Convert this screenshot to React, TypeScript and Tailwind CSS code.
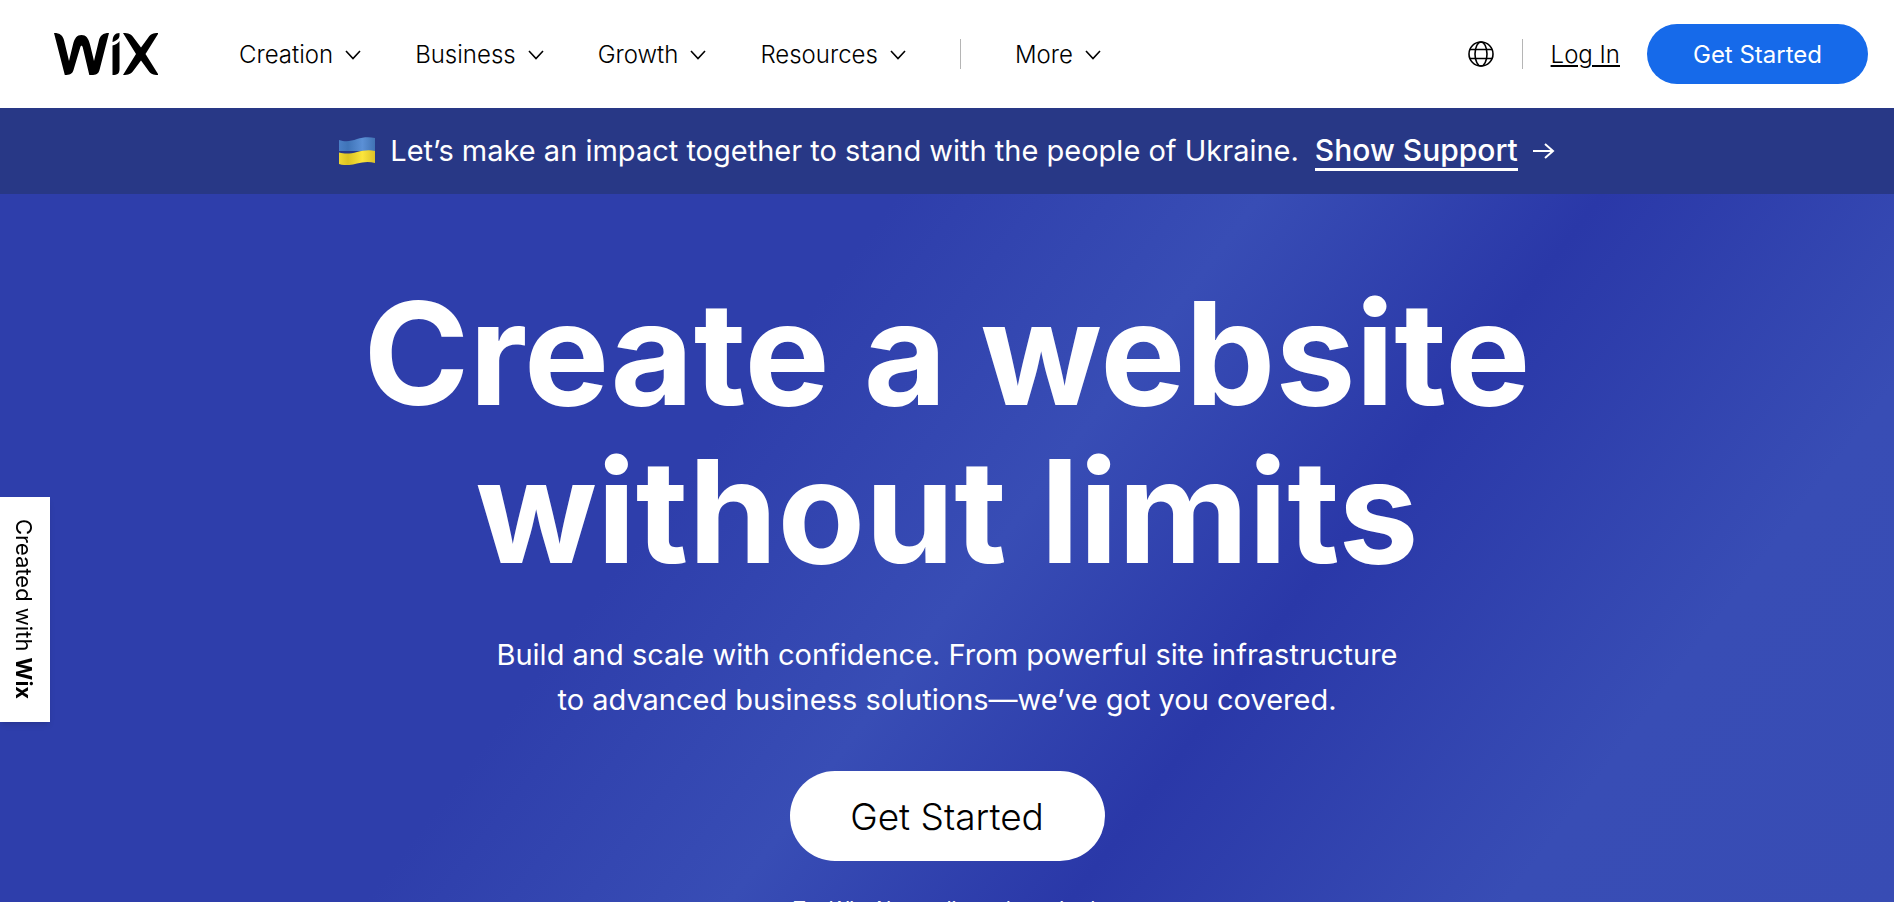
import { useId } from "react"

const navItems = ["Creation", "Business", "Growth", "Resources"]

function WixLogo() {
  return (
    <svg viewBox="0 0 104 42" className="h-[42px] w-[104px]" fill="currentColor" aria-hidden="true">
      <path d="M0 0c6 0 9 2.500 10.200 8l4.800 20 4-16.500C20.600 5 23 2 27.500 2s6.900 3 8.500 9.500L40 28l4.800-20C46 2.500 49 0 55 0l-9.500 37c-1 4-3.500 5-8 5h-2.200L28.800 14.500c-.5-2.300-2.100-2.300-2.600 0L19.500 37c-1 4-4 5-8.700 5z" />
      <path d="M58.500 9c0-6 2.500-9 7-9v2.500c0 3-2.500 5-7 6.500z" />
      <path d="M58.500 12.500c3.500-1 5.500-2.500 7-4.500v28c0 4.500-2 6-7 6z" />
      <path d="M69 0c5.500 0 8 1 10.500 4.500L87 14.500l7.300-10C96.800 1 99 0 104 0v1L91.500 21 104 41v1c-5 0-7.200-1-9.700-4.500L87 27.500l-7.500 10C77 41 74.500 42 69 42l13-21z" />
    </svg>
  )
}

function Chevron() {
  return (
    <svg viewBox="0 0 16 10" className="h-[10px] w-4" fill="none" stroke="currentColor" strokeWidth="1.600" aria-hidden="true">
      <path d="M1 1l7 7.500L15 1" />
    </svg>
  )
}

function NavButton({ label }: { label: string }) {
  return (
    <button type="button" className="flex items-center gap-3 pt-0.5">
      {label}
      <Chevron />
    </button>
  )
}

function Globe() {
  return (
    <svg viewBox="0 0 26 26" className="size-[26px]" fill="none" stroke="currentColor" strokeWidth="1.600" aria-hidden="true">
      <circle cx="13" cy="13" r="12" />
      <ellipse cx="13" cy="13" rx="6" ry="12" />
      <path d="M2 8.500h22M2 17.500h22" />
    </svg>
  )
}

function Flag() {
  const id = useId()
  return (
    <svg viewBox="0 0 36 28" className="h-7 w-9" aria-hidden="true">
      <defs>
        <linearGradient id={`${id}b`}>
          <stop offset="0" stopColor="#4a7fc6" />
          <stop offset=".25" stopColor="#3f74b8" />
          <stop offset=".65" stopColor="#5b90d6" />
          <stop offset="1" stopColor="#4173b4" />
        </linearGradient>
        <linearGradient id={`${id}y`}>
          <stop offset="0" stopColor="#f0d832" />
          <stop offset=".25" stopColor="#dcc322" />
          <stop offset=".65" stopColor="#fbe53c" />
          <stop offset="1" stopColor="#dcc228" />
        </linearGradient>
      </defs>
      <path d="M0 3c7 2.500 12 1 18-1s12-2.500 18-1v13H0z" fill={`url(#${id}b)`} />
      <path d="M0 15.500c7 2 12 1 18-.5s12-2.500 18-1V26c-6-1.500-12-1-18 .5S7 29 0 27z" fill={`url(#${id}y)`} />
    </svg>
  )
}

function Header() {
  return (
    <header className="flex h-[108px] shrink-0 items-center bg-white pr-[26px] pl-[54px] text-2xl font-light text-black">
      <a href="/" aria-label="Wix">
        <WixLogo />
      </a>
      <nav className="ml-[81px] flex items-center gap-[54px]">
        {navItems.map((item) => (
          <NavButton key={item} label={item} />
        ))}
        <span className="h-[30px] w-px bg-[#b5b5b5]" />
        <NavButton label="More" />
      </nav>
      <div className="ml-auto flex items-center">
        <button type="button" aria-label="Language">
          <Globe />
        </button>
        <span className="mx-7 h-[30px] w-px bg-[#b5b5b5]" />
        <a href="/login" className="pt-0.5 underline decoration-2 underline-offset-2">
          Log In
        </a>
        <button type="button" className="ml-[27px] h-[60px] w-[221px] rounded-full bg-[#166aea] pt-0.5 font-normal text-white">
          Get Started
        </button>
      </div>
    </header>
  )
}

function SupportBanner() {
  return (
    <div className="flex h-[86px] shrink-0 items-center justify-center bg-[#283886] text-[29px] text-white">
      <Flag />
      <p className="ml-[15px]">Let’s make an impact together to stand with the people of Ukraine.</p>
      <a href="/ukraine" className="ml-4 flex items-center gap-[15px] text-3xl font-medium">
        <span className="border-b-[3px] border-white">Show Support</span>
        <svg viewBox="0 0 22 16" className="h-4 w-[22px]" fill="none" stroke="currentColor" strokeWidth="2" aria-hidden="true">
          <path d="M0 8h20M12 1l8 7-8 7" />
        </svg>
      </a>
    </div>
  )
}

export default function App() {
  return (
    <div className="flex h-screen flex-col overflow-hidden font-[Inter,sans-serif]">
      <Header />
      <SupportBanner />
      <main className="flex min-h-0 flex-1 flex-col items-center bg-[linear-gradient(127deg,#2e3eab_0%,#2e3eab_37%,#384db5_52%,#2a38a8_66%,#384db5_84%,#384cb4_100%)] pt-20 text-center text-white">
        <h1 className="text-[143px] leading-[158px] font-bold">
          Create a website
          <br />
          without limits
        </h1>
        <p className="mt-[42px] text-[29px] leading-[45px]">
          Build and scale with confidence. From powerful site infrastructure
          <br />
          to advanced business solutions—we’ve got you covered.
        </p>
        <button type="button" className="mt-[49px] h-[90px] w-[315px] shrink-0 rounded-full bg-white pt-0.5 text-[37px] font-light text-black">
          Get Started
        </button>
        <p className="mt-[34px] text-xl">Try Wix. No credit card required.</p>
      </main>
      <a
        href="/"
        className="fixed top-[497px] left-0 flex h-[225px] w-[50px] items-center justify-center bg-white pr-1 text-[22px] text-black shadow-md [writing-mode:vertical-rl]"
      >
        <span>
          Created with <b>Wix</b>
        </span>
      </a>
    </div>
  )
}
